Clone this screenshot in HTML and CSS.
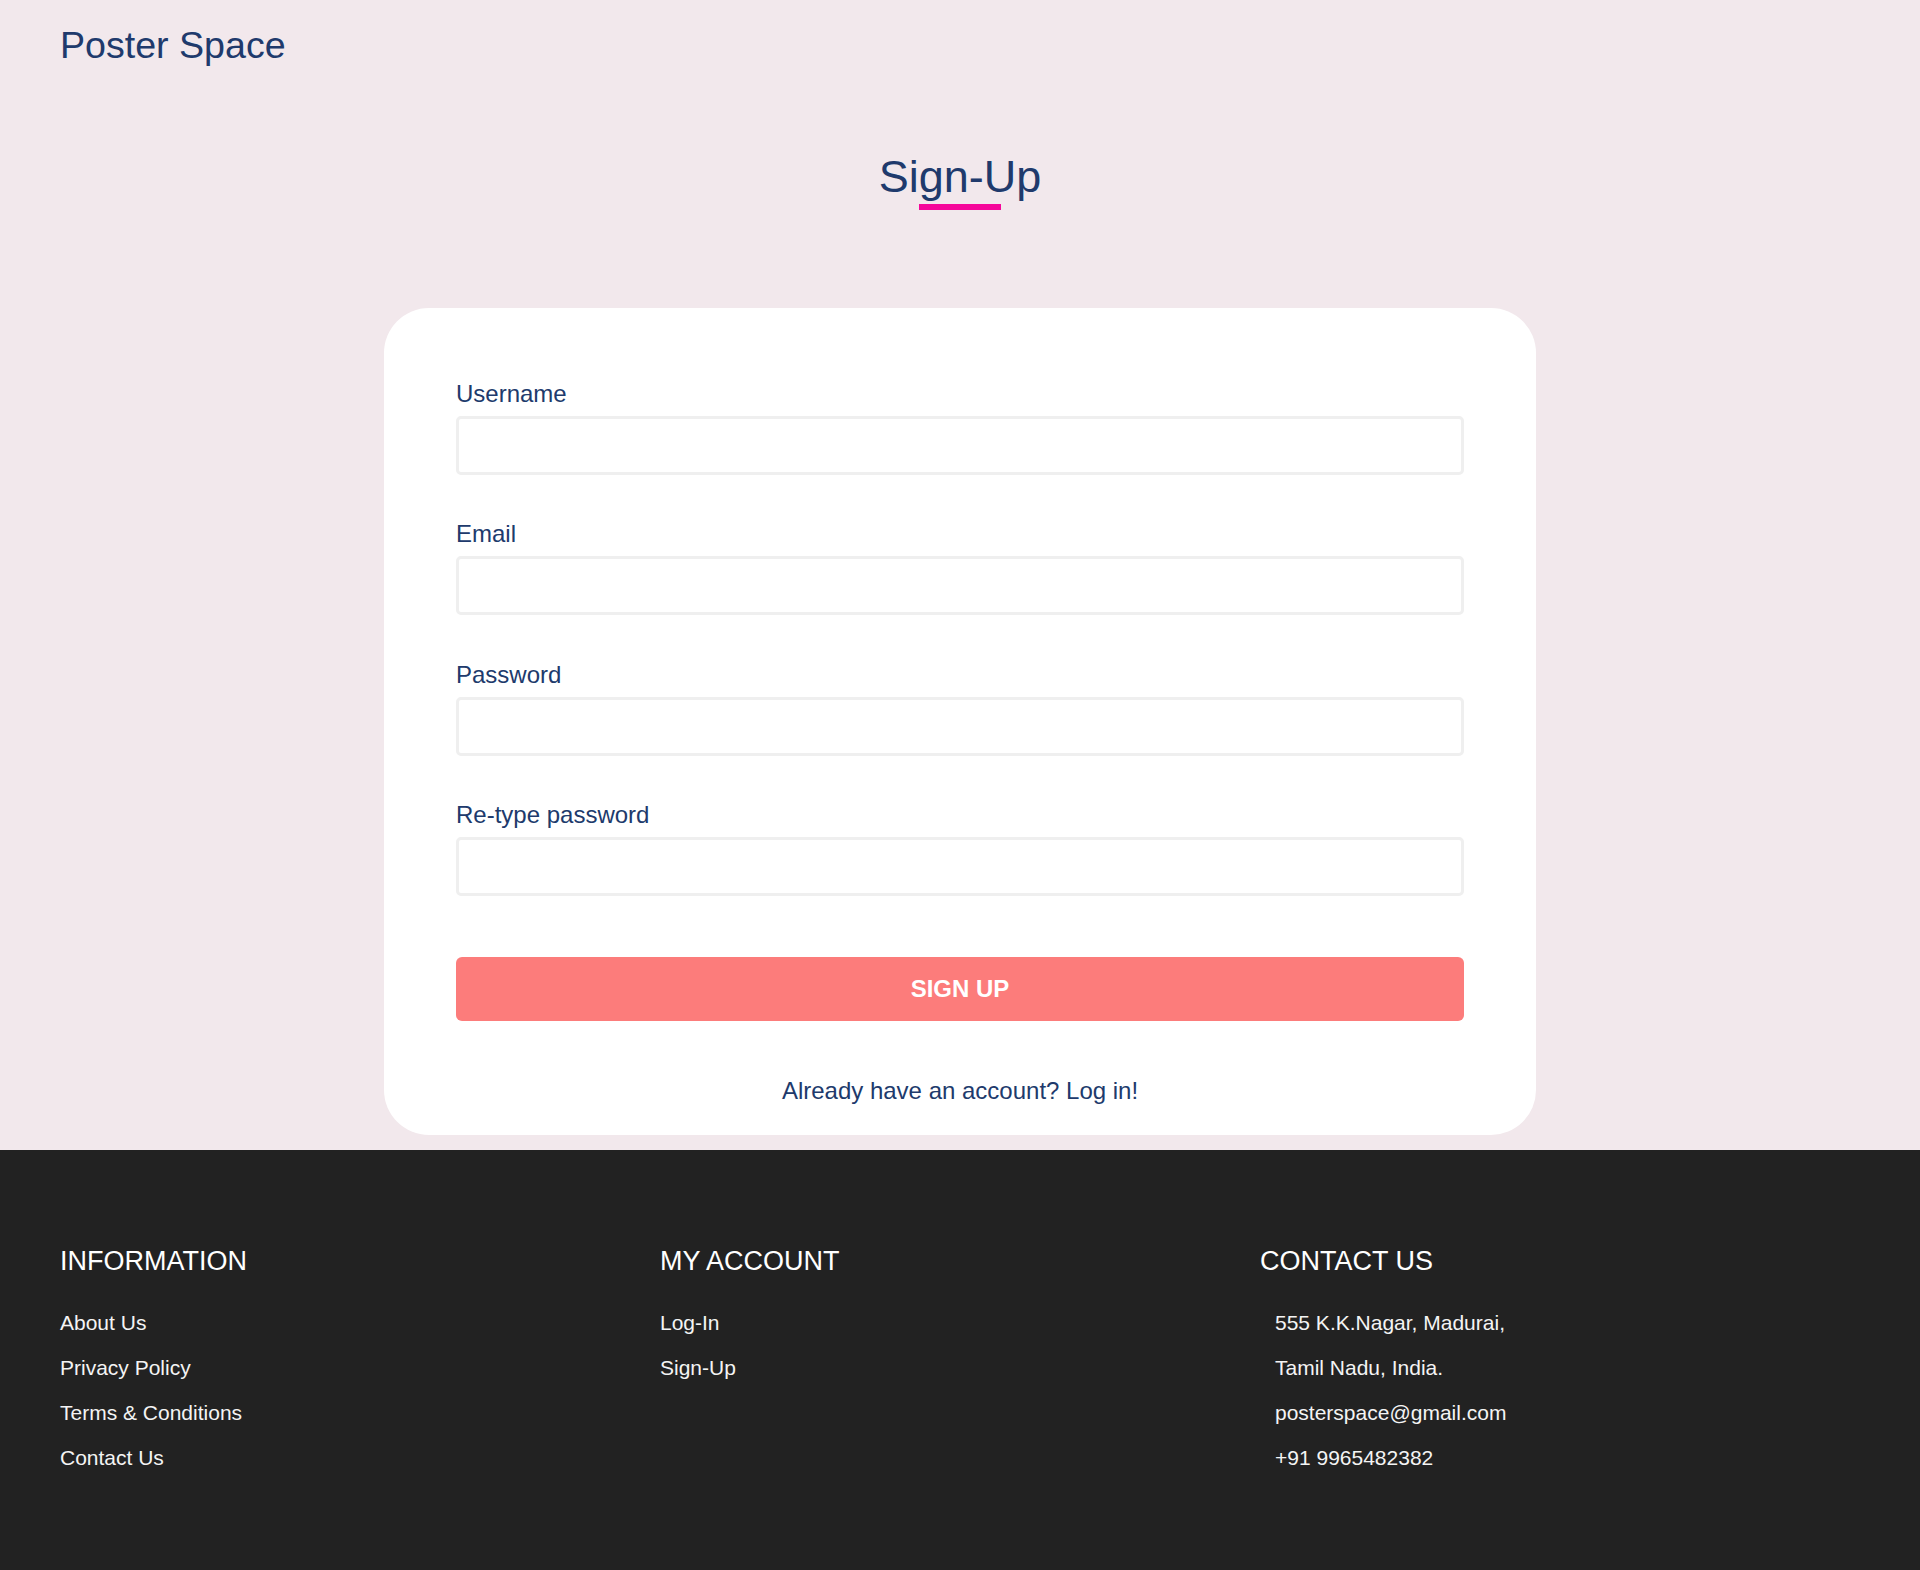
FILE: index.html
```html
<!DOCTYPE html>
<html lang="en">
<head>
<meta charset="utf-8">
<title>Poster Space - Sign-Up</title>
<link rel="stylesheet" href="styles.css">
</head>
<body>
<header class="site-header">
  <a class="logo" href="#">Poster Space</a>
</header>

<main class="main">
  <div class="title-wrap">
    <h1 class="page-title">Sign-Up</h1>
    <div class="title-underline"></div>
  </div>

  <form class="card">
    <div class="field">
      <label class="field-label" for="username">Username</label>
      <input class="field-input" id="username" type="text">
    </div>
    <div class="field">
      <label class="field-label" for="email">Email</label>
      <input class="field-input" id="email" type="email">
    </div>
    <div class="field">
      <label class="field-label" for="password">Password</label>
      <input class="field-input" id="password" type="password">
    </div>
    <div class="field field-last">
      <label class="field-label" for="password2">Re-type password</label>
      <input class="field-input" id="password2" type="password">
    </div>
    <button class="submit-btn" type="button">SIGN UP</button>
    <p class="login-note">Already have an account? Log in!</p>
  </form>
</main>

<footer class="site-footer">
  <div class="footer-col">
    <h3 class="footer-heading">INFORMATION</h3>
    <ul class="footer-list">
      <li>About Us</li>
      <li>Privacy Policy</li>
      <li>Terms &amp; Conditions</li>
      <li>Contact Us</li>
    </ul>
  </div>
  <div class="footer-col">
    <h3 class="footer-heading">MY ACCOUNT</h3>
    <ul class="footer-list">
      <li>Log-In</li>
      <li>Sign-Up</li>
    </ul>
  </div>
  <div class="footer-col">
    <h3 class="footer-heading">CONTACT US</h3>
    <ul class="footer-list footer-list-indent">
      <li>555 K.K.Nagar, Madurai,</li>
      <li>Tamil Nadu, India.</li>
      <li>posterspace@gmail.com</li>
      <li>+91 9965482382</li>
    </ul>
  </div>
</footer>
</body>
</html>
```

FILE: styles.css
```css
* {
  box-sizing: border-box;
}

html, body {
  margin: 0;
  padding: 0;
}

body {
  background: #f2e8ec;
  font-family: "Liberation Sans", Arial, Helvetica, sans-serif;
  color: #203a6c;
}

.site-header {
  padding: 24px 60px 0;
  height: 67px;
}

.logo {
  display: inline-block;
  font-size: 37.6px;
  line-height: 42px;
  color: #203a6c;
  text-decoration: none;
}

.main {
  padding-bottom: 15px;
}

.title-wrap {
  margin-top: 85px;
  text-align: center;
}

.page-title {
  margin: 0;
  font-size: 45px;
  font-weight: normal;
  line-height: 50px;
  color: #203a6c;
}

.title-underline {
  width: 82px;
  height: 6px;
  margin: 2px auto 0;
  background: #f5079a;
}

.card {
  width: 1152px;
  margin: 98px auto 0;
  padding: 72px 72px 30px;
  background: #ffffff;
  border-radius: 45px;
  display: flex;
  flex-direction: column;
}

.field {
  display: flex;
  flex-direction: column;
  margin-bottom: 45.4px;
}

.field-last {
  margin-bottom: 60.4px;
}

.field-label {
  font-size: 24px;
  line-height: 28px;
  margin-bottom: 8px;
  color: #203a6c;
}

.field-input {
  height: 59px;
  width: 100%;
  border: 3px solid #efefef;
  border-radius: 5px;
  background: #ffffff;
  font-family: inherit;
  font-size: 20px;
  padding: 0 12px;
  outline: none;
}

.submit-btn {
  height: 64px;
  width: 100%;
  border: none;
  border-radius: 6px;
  background: #fc7c7b;
  color: #ffffff;
  font-family: inherit;
  font-size: 24px;
  font-weight: bold;
  cursor: pointer;
}

.login-note {
  margin: 56.3px 0 0;
  text-align: center;
  font-size: 24px;
  line-height: 28px;
  color: #203a6c;
}

.site-footer {
  background: #222222;
  color: #ffffff;
  padding: 96px 60px 89px;
  display: grid;
  grid-template-columns: repeat(3, 1fr);
  min-height: 420px;
}

.footer-heading {
  margin: 0 0 24px;
  font-size: 27px;
  font-weight: normal;
  line-height: 30px;
  color: #ffffff;
}

.footer-list {
  list-style: none;
  margin: 0;
  padding: 0;
}

.footer-list li {
  font-size: 21px;
  line-height: 45px;
  color: #f4f4f4;
}

.footer-list-indent {
  padding-left: 15px;
}
```
